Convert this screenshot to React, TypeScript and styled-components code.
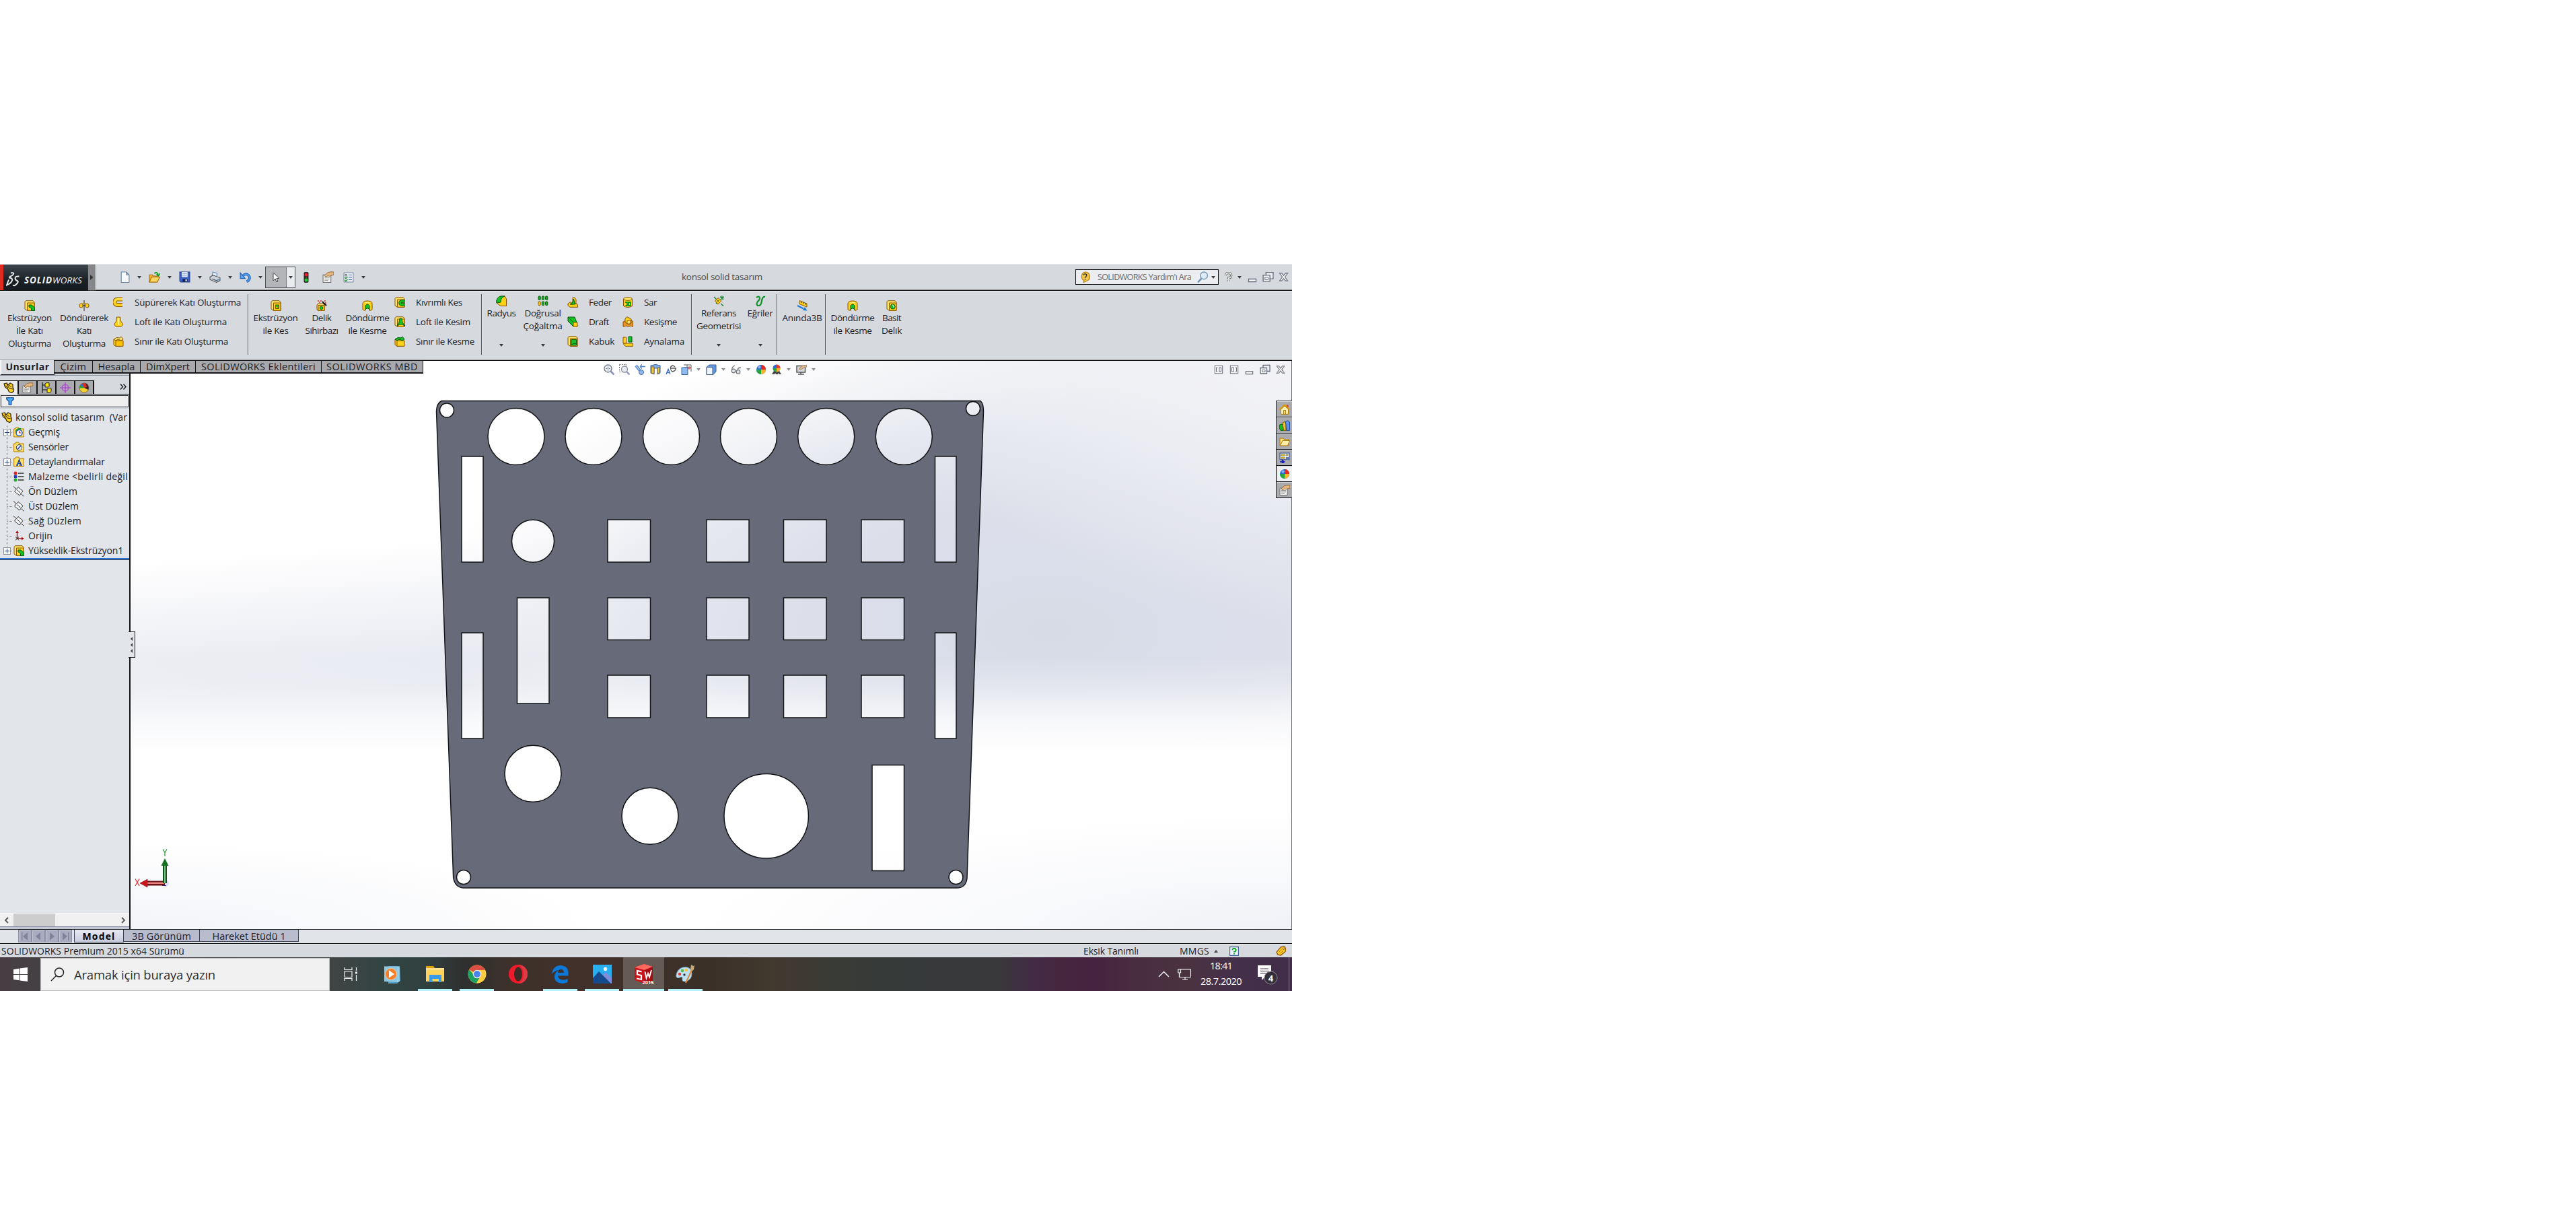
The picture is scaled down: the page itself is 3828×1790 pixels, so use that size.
import React, { useLayoutEffect, useRef, useState } from 'react';
import styled, { createGlobalStyle, css } from 'styled-components';

const Global = createGlobalStyle`
  body { margin: 0; background: #fff; }
  * { box-sizing: border-box; }
  svg { display: block; flex: none; }
`;

/* ---------- text that keeps a fixed run length ---------- */

const Run = styled.span<{ $size: number; $bold?: boolean; $color?: string; $lh?: number }>`
  display: block;
  flex: none;
  white-space: pre;
  font-family: 'Open Sans', 'Noto Sans', sans-serif;
  font-size: ${p => p.$size}px;
  font-weight: ${p => (p.$bold ? 700 : 400)};
  line-height: ${p => p.$lh ?? 19}px;
  color: ${p => p.$color ?? '#1b1b1f'};
`;

type TextProps = { children: string; w: number; size?: number; bold?: boolean; color?: string; lh?: number };

function Text({ children, w, size = 13.5, bold, color, lh }: TextProps) {
  const ref = useRef<HTMLSpanElement>(null);
  const [gap, setGap] = useState(0);
  useLayoutEffect(() => {
    const range = document.createRange();
    range.selectNodeContents(ref.current!);
    setGap((w - range.getBoundingClientRect().width) / children.length);
  }, []);
  return (
    <Run ref={ref} $size={size} $bold={bold} $color={color} $lh={lh} style={{ letterSpacing: gap, width: w }}>
      {children}
    </Run>
  );
}

/* ---------- icons ---------- */

const Icon = ({ s = 16, v = '0 0 16 16', children }: { s?: number; v?: string; children: React.ReactNode }) => (
  <svg width={s} height={s} viewBox={v}>{children}</svg>
);

const GOLD = '#ffd21a';
const EDGE = '#8a5200';
const GREEN = '#12c322';

const Block = () => (
  <>
    <path d="M1 2.5 2.5.7H13L15 3V15.3H4.5L1 13Z" fill="#ffe66a" stroke={EDGE} />
    <path d="M4.5 4H15V15.3H4.5Z" fill={GOLD} stroke={EDGE} />
  </>
);

const icons = {
  boss: <><Block /><path d="M7 7h4l4.5 4v4.5h-5V12L7 10Z" fill={GREEN} stroke="#07570f" /></>,
  revolve: <><path d="M8 0v16M4 8h8" stroke="#222" /><ellipse cx="3.5" cy="8" rx="2.7" ry="3" fill={GOLD} stroke={EDGE} /><ellipse cx="12.5" cy="8" rx="2.7" ry="3" fill={GOLD} stroke={EDGE} /><path d="M3 5.5q5-3 10 0" fill="none" stroke="#c98a00" /></>,
  sweep: <><path d="M14 3.5H6.5a4 4 0 0 0 0 8.5H14" fill="none" stroke={EDGE} strokeWidth="6" /><path d="M14 3.5H6.5a4 4 0 0 0 0 8.5H14" fill="none" stroke={GOLD} strokeWidth="4" /><path d="M14 3H6.5a4 4 0 0 0-3.6 4" fill="none" stroke="#fff3a0" /></>,
  loft: <><path d="M5.5 1h5l1 6 3.5 5-3 3.3H4.5L1.5 12 5 7Z" fill={GOLD} stroke={EDGE} /><path d="M8 2v11" stroke="#fff3a0" strokeWidth="2" /></>,
  boundary: <><path d="M1 5h11v10H3L1 13Z" fill={GOLD} stroke={EDGE} /><path d="M4 7h11v8.3H4Z" fill="#ffc400" stroke={EDGE} /><path d="M1 5q4-4 9-2l2-2 3 4-3 2-2-1Q6 4 4 7Z" fill="#ffe66a" stroke={EDGE} /></>,
  cut: <><Block /><path d="M7.5 7h5v5.500h-5Z" fill={GREEN} stroke="#6b4a00" /><path d="M8 9.5h2.500V12H8Z" fill="#d9b400" /></>,
  wizard: <><path d="M1 7l1.500-2H10l2 2v8.500H3L1 14Z" fill="#ffe66a" stroke={EDGE} /><path d="M3 7.500h9v8H3Z" fill={GOLD} stroke={EDGE} /><circle cx="7.500" cy="11.500" r="2.300" fill={GREEN} stroke="#07570f" /><path d="M9 2l6 6" stroke="#111" strokeWidth="2" /><path d="M2 1h2M6 1h2M12 1h2M4 3h2M13 4h2" stroke="#e02a1a" strokeWidth="1.500" /></>,
  revcut: <><path d="M1 5q0-4 7-4t7 4v9l-3.500 1.500L10 11H6l-1.500 4.500L1 14Z" fill={GOLD} stroke={EDGE} /><path d="M5 14V8q3-4 6 0v6l-2-2H7Z" fill={GREEN} stroke="#07570f" /><path d="M4 4q4-2 8 0" fill="none" stroke="#fff3a0" /></>,
  sweepcut: <><Block /><path d="M15 6.500h-4a2.500 2.500 0 0 0 0 5h4" fill="none" stroke="#07570f" strokeWidth="4.500" /><path d="M15 6.500h-4a2.500 2.500 0 0 0 0 5h4" fill="none" stroke={GREEN} strokeWidth="2.500" /></>,
  loftcut: <><Block /><path d="M8 3h3l1 6 3.500 5-4-2H8l-4 2 3-5Z" fill={GREEN} stroke="#07570f" /></>,
  boundcut: <><path d="M1 5h11v10H3L1 13Z" fill={GOLD} stroke={EDGE} /><path d="M4 7h11v8.300H4Z" fill={GOLD} stroke={EDGE} /><path d="M1 5q4-4 9-2l2-2 3 4-3 2-2-1Q6 4 4 7Z" fill={GREEN} stroke="#07570f" /></>,
  fillet: <><path d="M1 7 7 1h6l2.500 4v10.500H7L1 11Z" fill={GOLD} stroke={EDGE} /><path d="M1 7Q3 1 8 1h5Q7 3 7 10L1 11Z" fill={GREEN} stroke="#07570f" /></>,
  pattern: <>{[0, 1, 2].map(i => [0, 1].map(j => <g key={`${i}${j}`}><rect x={1 + i * 5.300} y={1 + j * 8} width="3.200" height="5.500" rx="1" fill={i === 0 && j ? GOLD : '#1fae2c'} stroke={i === 0 && j ? EDGE : '#07570f'} /></g>))}</>,
  rib: <><path d="M1 10 4 8h2v3l8-1 1.500 2v3.300H4L1 13Z" fill={GOLD} stroke={EDGE} /><path d="M8 1h3l2 3v6H8Z" fill={GOLD} stroke={EDGE} /><path d="M4 11Q9 9 9.500 3l2 8Z" fill={GREEN} stroke="#07570f" /></>,
  draft: <><path d="M1 1h10l3 8v6L8 14 1 7Z" fill={GREEN} stroke="#07570f" /><path d="M1 1 9 9" stroke="#07570f" /><path d="M9 9h6v6.300H9Z" fill={GOLD} stroke={EDGE} /></>,
  shell: <><Block /><path d="M6 5.500h7.500v8.500H6Z" fill={GREEN} stroke="#07570f" /><path d="M6 14l2.500-2.500h5" stroke="#07570f" fill="none" /></>,
  wrap: <><path d="M1.500 3v10.500q6.500 4 13 0V3" fill={GOLD} stroke={EDGE} /><ellipse cx="8" cy="3" rx="6.500" ry="2.300" fill="#ffe66a" stroke={EDGE} /><path d="M4 8h3v5H4.500M9 8h3v5H9Z" fill="none" stroke="#0b9a1a" strokeWidth="1.800" /></>,
  intersect: <><path d="M1 8l4-2h9l1.500 2v7.300l-3-1.300-4 1.300-3-1.300-4.500 1.300Z" fill="#e8952a" stroke={EDGE} /><path d="M4 3l3-2.300L13 4v6l-3 2-6-3Z" fill={GOLD} stroke={EDGE} /><path d="M7 6h5v5H7Z" fill="#ffe66a" stroke={EDGE} /></>,
  mirror: <><path d="M1 2h4.500v9H1Z" fill={GOLD} stroke={EDGE} /><path d="M9 1h5v8H9Z" fill={GREEN} stroke="#07570f" /><path d="M4 11h11.500v4.300H4L1.500 12Z" fill={GOLD} stroke={EDGE} /></>,
  refgeo: <><path d="M1 2l4 4M11 12l4 3.500M4 12l2-2" stroke="#0d7d22" strokeWidth="1.300" /><path d="M7 3.500 12 8l-5 5-4.500-5Z" fill={GOLD} stroke={EDGE} /><path d="M7 7v2" stroke="#333" strokeWidth="1.500" /><path d="M13 0v7M9.500 3.500h6.500M10.500 1l5 5M15.500 1l-5 5" stroke="#0d7d22" /></>,
  curves: <path d="M2 3q5-3 5 1 0 2-3 5-3 4 0 6 5 1 6-7 1-7 5-6" fill="none" stroke="#17902e" strokeWidth="2.200" />,
  instant: <><path d="M4 .5 15 5v5L4 5.500Z" fill={GOLD} stroke={EDGE} /><path d="M7 2v2M10 3v2.500M13 4v2.500" stroke="#333" /><path d="M1 8l9 4.500" stroke="#1b77d8" strokeWidth="2" /><path d="M15.500 15.500 9 15l3-5Z" fill="#1b77d8" /></>,
  hole: <><Block /><circle cx="9.700" cy="9.500" r="3.500" fill={GREEN} stroke="#07570f" /><path d="M9 7q3 1 2 4" stroke="#bff5c0" fill="none" strokeWidth="1.500" /></>,
  doc: <path d="M3 1h7l4 4v10.500H3ZM10 1v4h4" fill="#f6faff" stroke="#5e7f9f" />,
  open: <><path d="M1 5h4l1 1.500h6v8.500H1Z" fill="#f7b52b" stroke="#a86a00" /><path d="M1 15l3-7h11.500L12 15Z" fill="#ffd766" stroke="#a86a00" /><path d="M8 3q4-3 5 2M11 4l2.500 2.500L15.500 3" stroke="#1f9c2d" fill="none" strokeWidth="1.700" /></>,
  save: <><path d="M1 1h14v14H2.500L1 13.500Z" fill="#3d63c8" stroke="#1d3a88" /><path d="M4 1h8v7H4Z" fill="#e8eefa" /><path d="M5 3h6M5 5.500h6" stroke="#8fa4cf" /><path d="M5 10.500h7V15H5Z" fill="#16285f" /><path d="M9 11.500h2V14H9Z" fill="#fff" /></>,
  print: <><path d="M5 1l6 2-1 5-6-2Z" fill="#eaf1fb" stroke="#5d7fae" /><path d="M1 8l4-2.500L15 9v4l-5 2.500-9-4Z" fill="#cfd3da" stroke="#4c5158" /><path d="M4 10.500l6 2.500 4-2" stroke="#4c5158" fill="none" /><path d="M11 12l3-1.500V12l-3 1.700Z" fill="#4aa0e8" /></>,
  undo: <><path d="M5 6q4-4 8 0 3 5-3 8.500" fill="none" stroke="#1f5fc0" strokeWidth="3.600" /><path d="M5 6q4-4 8 0 3 5-3 8.500" fill="none" stroke="#58a2f0" strokeWidth="1.600" /><path d="M1 2v8h7Z" fill="#58a2f0" stroke="#1f5fc0" /></>,
  cursor: <path d="M4 1v12l3-3 2 5 2-1-2-4.500h4Z" fill="#fff" stroke="#444" />,
  traffic: <><rect x="4.500" y="0" width="7" height="16" rx="2" fill="#2a2a2a" /><circle cx="8" cy="4" r="2.500" fill="#e81c2a" /><circle cx="8" cy="8" r="1.300" fill="#5a4a10" /><circle cx="8" cy="12" r="2.500" fill="#22c436" /></>,
  props: <><path d="M1 5h11v10.500H1Z" fill="#f4f4f2" stroke="#6d6d6d" /><path d="M3 8.500h7M3 10.800h7M3 13h5" stroke="#8b8b8b" /><path d="M3 6l4-4q4-2 9-1v4l-4 1-2 1-2-1-3 2Z" fill="#e6b680" stroke="#8a5a2a" strokeWidth=".8" /></>,
  list: <><path d="M1 1h14v14H1Z" fill="#e9eef6" stroke="#7688a5" /><path d="M3 3.500h2.500V6H3Z" fill="#fff" stroke="#456" strokeWidth=".8" /><path d="M8 4.500h5M8 8h5M8 11.500h5" stroke="#4b6aa0" /><path d="M2.500 8l1.500 2 2.500-3M2.500 12l1.500 2 2.500-3" stroke="#1d9c2a" fill="none" strokeWidth="1.300" /></>,
  part: <><path d="M1 2l4-1 2 3 3-3 4 2v4l1.500 3v3l-3 2.500-4-1.500-2-4-4-3Z" fill={GOLD} stroke="#2c1f00" strokeWidth="1.200" /><path d="M5 3l4 6 5 1M8 4l4 3M3 5l4 3" stroke="#2c1f00" fill="none" /></>,
  config: <><path d="M2 0v16M2 4h5M2 11h7" stroke="#111" strokeWidth="1.200" /><path d="M6 2l2-1.300h4v5L10.500 7H6Z" fill="#ffe600" stroke="#222" /><path d="M9 10l2-1.300h4v5L13.500 15H9Z" fill="#ffe600" stroke="#222" /></>,
  target: <><circle cx="8" cy="8" r="4.700" fill="none" stroke="#b24bd8" strokeWidth="1.500" /><path d="M8 0v16M0 8h16" stroke="#b24bd8" strokeWidth="1.500" /></>,
  ball: <><circle cx="8" cy="8" r="7" fill="#2c6fd8" /><path d="M8 8V1a7 7 0 0 1 7 7Z" fill="#e02a22" /><path d="M8 8h7a7 7 0 0 1-7 7Z" fill="#f7b52b" /><path d="M8 8v7a7 7 0 0 1-7-7Z" fill="#24a63a" /><circle cx="5.500" cy="4.500" r="2" fill="#fff" opacity=".5" /></>,
  beach: <><circle cx="8" cy="8" r="7" fill="#f7d02b" stroke="#7a4a10" strokeWidth=".7" /><path d="M8 8L2 4.500A7 7 0 0 1 9 1Z" fill="#2c6fd8" /><path d="M8 8L9 1a7 7 0 0 1 5 10Z" fill="#3a2030" /><path d="M8 8 5 2q6-3 7 5Z" fill="#e02a22" /><path d="M8 8L1 9Q1 6 2.500 4Z" fill="#24a63a" /></>,
  funnel: <path d="M1 1h14v3l-4.500 4.500V15h-5V8.500L1 4Z" fill="#48a8f0" stroke="#0f3f9c" strokeWidth="1.500" />,
  history: <><path d="M.7 3h2l1-2h4l1 2h6.600v12H.7Z" fill="#ffe166" stroke="#b07800" /><circle cx="8.500" cy="9" r="4.500" fill="#fff" stroke="#2a55b8" strokeWidth="1.500" /><path d="M8.500 6v3h2.500" stroke="#c02020" fill="none" /><path d="M3 7q2-5 8-4" stroke="#1a9a2a" fill="none" strokeWidth="1.800" /></>,
  sensor: <><path d="M.7 3h2l1-2h4l1 2h6.600v12H.7Z" fill="#ffe166" stroke="#b07800" /><circle cx="8.500" cy="8.800" r="4.200" fill="#e8eefc" stroke="#333" /><path d="M6 11.500 11 6" stroke="#2a3fc8" strokeWidth="1.500" /></>,
  annot: <><path d="M.7 3h2l1-2h4l1 2h6.600v12H.7Z" fill="#ffe166" stroke="#b07800" /><path d="M4 13h3M9 13h4M5.500 13 8.500 5l3 8M6.500 10.500h4" fill="none" stroke="#1b3fa8" strokeWidth="1.500" /></>,
  material: <><circle cx="3" cy="3" r="2.500" fill="#e02222" /><circle cx="3" cy="8" r="2.500" fill="#2038c8" /><circle cx="3" cy="13" r="2.500" fill="#1fae2c" /><path d="M7 3h8.500M7 8h8.500M7 13h8.500" stroke="#333" strokeWidth="1.500" /></>,
  plane: <><path d="M7 1.500 14 7.500 9 14 1.500 8Z" fill="#f4f5f8" stroke="#333" /><path d="M0 .5 4 4M5.500 5.500l5 5M12 12l3.500 3.500" stroke="#222" /></>,
  origin: <><path d="M5.500 12V2M5.500 12H13" stroke="#a51515" strokeWidth="1.400" /><path d="M5.500 0 8 4H3ZM16 12l-4-2.500v5Z" fill="#a51515" /><path d="M3 9.500l5 5M8 9.500l-5 5" stroke="#222" /></>,
  zoomfit: <><circle cx="6.500" cy="6.500" r="5.500" fill="#e9edf4" stroke="#6f7680" strokeWidth="1.300" /><path d="M6.500 3.500v6M3.500 6.500h6" stroke="#6f7680" strokeDasharray="2 2" /><path d="M10.500 10.500l5 5" stroke="#8a93c0" strokeWidth="2.500" /></>,
  zoomarea: <><path d="M.5.500h11v11H.5Z" fill="none" stroke="#777" strokeDasharray="2 1.500" /><circle cx="8" cy="7.500" r="4.500" fill="#e9edf4" stroke="#8a9098" strokeWidth="1.300" /><path d="M11 11l4.500 4.500" stroke="#8a93c0" strokeWidth="2.300" /></>,
  prev: <><path d="M2 2 9 11" stroke="#4c7fc4" strokeWidth="4" /><path d="M2 2 9 11" stroke="#a8cbf0" strokeWidth="1.800" /><circle cx="10" cy="12" r="3.500" fill="#8fb8e8" stroke="#4c6fa8" /><path d="M8 3.500h8M8 3.500l3-3M8 3.500l3 3" stroke="#4c7fc4" fill="none" strokeWidth="1.300" /></>,
  section: <><path d="M1 2q7-3 14 0v11l-4 2V6H6v9l-5-2Z" fill="#7fb0ea" stroke="#3a64a0" /><path d="M2 4h4v10.500L2 13ZM11 5h3v8l-3 1.500Z" fill="#f2c53a" stroke="#7a5a10" strokeWidth=".8" /></>,
  annview: <><path d="M1 15 4 7.500 7 15M2 12.500h4" fill="none" stroke="#3a6cc0" strokeWidth="1.400" /><path d="M8 8q-2-5 3-6l3 2M15 5q1 5-5 6l-2-2M8 6h7" fill="none" stroke="#555" strokeWidth="1.300" /></>,
  orient: <><path d="M4 1h11v10M9 1v10M4 5h11" fill="none" stroke="#555" /><path d="M1 5h9v10.500H1Z" fill="#8fbcf0" stroke="#3a64a0" /><path d="M12 3v5M9.500 6h5" stroke="#d84040" /></>,
  cube: <><path d="M1 4.500 5 1h10v10l-4 4.500H1Z" fill="#5e98e0" stroke="#44608c" /><path d="M1 4.500h9v11H1Z" fill="#eef4fc" stroke="#44608c" /></>,
  glasses: <><path d="M2 9Q1 4 6 2M10 8q1-3 5-3" stroke="#777" fill="none" strokeWidth="1.300" /><circle cx="4" cy="10" r="2.800" fill="#dfe6ee" stroke="#777" strokeWidth="1.300" /><circle cx="11" cy="11.500" r="2.800" fill="#dfe6ee" stroke="#777" strokeWidth="1.300" /></>,
  scene: <><path d="M1 15l3-5h8l3 5h-3l-1-2-1 2H7l-1-2-1 2Z" fill="#444" /><circle cx="8" cy="6" r="5.500" fill="#2c6fd8" /><path d="M8 6V.5A5.500 5.500 0 0 1 13.500 6Z" fill="#e04038" /><path d="M8 6h5.500A5.500 5.500 0 0 1 8 11.500Z" fill="#f7b52b" /><path d="M8 6v5.500A5.500 5.500 0 0 1 2.500 6Z" fill="#24a63a" /></>,
  monitor: <><path d="M1 2.500h12.500v9.500H1Z" fill="#d8dade" stroke="#555" strokeWidth="1.500" /><path d="M7 12v2.500M3 15h9" stroke="#555" strokeWidth="1.500" /><path d="M4 7l4-4q3-2 7.500-1.500v2.500l-5 2-3.500 2Z" fill="#dcb78c" stroke="#8a6a4a" strokeWidth=".7" /></>,
  helpball: <><path d="M8 1a6.500 6.500 0 0 1 3 12.300L6 15.500 6.500 13A6.500 6.500 0 0 1 8 1Z" fill="#f5c640" stroke="#a87810" /><path d="M5.700 5.500q.5-1.800 2.300-1.800 2.300.2 2.300 1.800T8 8.500v1M8 10.700v1.300" fill="none" stroke="#333" strokeWidth="1.300" /></>,
  lens: <><circle cx="9.500" cy="6" r="5" fill="#dcebfa" stroke="#7090b0" strokeWidth="1.300" /><path d="M6 10 1 15.500" stroke="#6f8fb4" strokeWidth="2.200" /></>,
  quest: <><path d="M3.500 5.500q.5-4 4.500-4 4.500.2 4.500 4T8 9.500v2M8 13v2" fill="none" stroke="#555" strokeWidth="3.400" /><path d="M3.500 5.500q.5-4 4.500-4 4.500.2 4.500 4T8 9.500v2M8 13v2" fill="none" stroke="#f2f2f2" strokeWidth="1.700" /></>,
  min: <path d="M2.500 10.500h11v4h-11Z" fill="#fff" stroke="#66697a" strokeWidth="1.300" />,
  restore: <><path d="M5 1.500h10v9H5Z" fill="#f0f1f4" stroke="#66697a" strokeWidth="1.300" /><path d="M1 5.500h9.500V14H1Z" fill="#fff" stroke="#66697a" strokeWidth="1.300" /><path d="M3.500 8.500h4.500v3H3.500Z" fill="none" stroke="#66697a" /></>,
  close: <path d="M1.500 2h3.500L8 5.800 11 2h3.500L10 8l4.500 6H11L8 10.200 5 14H1.500L6 8Z" fill="#fff" stroke="#66697a" strokeWidth="1.200" />,
  paneL: <><path d="M1.500 1.500h13v13h-13Z" fill="#f6f7f9" stroke="#70737f" strokeWidth="1.200" /><path d="M4 4.500v7M4 4.500h2M4 11.500h2M9 4.500h3v7H9Z" fill="none" stroke="#70737f" strokeWidth="1.200" /></>,
  paneR: <><path d="M1.500 1.500h13v13h-13Z" fill="#f6f7f9" stroke="#70737f" strokeWidth="1.200" /><path d="M12 4.500v7M12 4.500h-2M12 11.500h-2M4 4.500h3v7H4Z" fill="none" stroke="#70737f" strokeWidth="1.200" /></>,
  home: <><path d="M11 1.500h2.500V6H11Z" fill="#d83a2a" /><path d="M2.500 8v7.300h11V8L8 3Z" fill="#fff3b8" stroke="#a87810" /><path d="M.7 8.500 8 1.500l7.300 7" fill="none" stroke="#d99a10" strokeWidth="2" /><path d="M6.500 9.500h3v5.800h-3Z" fill="#ffe066" stroke="#a87810" /></>,
  books: <><path d="M.7 7 4 6l2 2v7.300H2L.7 13Z" fill={GREEN} stroke="#07570f" /><path d="M5 4l3-1.500L10 5v10.300H6.500Z" fill="#f7c62b" stroke="#7a5200" /><path d="M9.500 2 13 .8 15.500 3v12.300h-5Z" fill="#5f92e8" stroke="#23478f" /></>,
  folder: <><path d="M1 3h5l1 1.500h6.500v9.500H1Z" fill="#ffdf7a" stroke="#b07a10" /><path d="M1.500 14 5 6.500h10.500L12.500 14Z" fill="#fff0a8" stroke="#b07a10" /></>,
  views: <><path d="M1 1h14v9.500H1Z" fill="#eef3fb" stroke="#5b6f98" strokeWidth="1.500" /><path d="M3 3h5v2H3ZM10 3h3v2h-3ZM3 7h5v2H3Z" fill="#f0d000" stroke="#555" strokeWidth=".5" /><path d="M10 7h4v3h-4Z" fill="#5b77b8" /><path d="M1 14h4M4.500 11.500 7.500 14l-3 2.500Z" stroke="#1018c0" strokeWidth="1.500" fill="#1018c0" /></>,
  tag: <><path d="M1 10 8 2l5-1 2.500 3-.5 5-7 6-5-1Z" fill="#ffca20" stroke="#8a5200" strokeWidth="1.300" /><circle cx="12" cy="4.500" r="1.300" fill="#fff" stroke="#8a5200" /><path d="M5 10l4-4M7 12l4-4" stroke="#8a5200" strokeWidth=".8" /></>,
  qbox: <><path d="M.7.700h14.600v14.600H.7Z" fill="#eef2fa" stroke="#3b5f94" strokeWidth="1.300" /><path d="M5 6q0-2.500 3-2.500T11 6 8 9v1M8 11.500v2" fill="none" stroke="#12a322" strokeWidth="2.200" /></>,
};
type IconName = keyof typeof icons;
const I = ({ n, s = 16 }: { n: IconName; s?: number }) => <Icon s={s}>{icons[n]}</Icon>;

const Caret = styled.i<{ $c?: string; $up?: boolean }>`
  flex: none;
  width: 0;
  height: 0;
  border-left: 3.5px solid transparent;
  border-right: 3.5px solid transparent;
  ${p => (p.$up ? 'border-bottom' : 'border-top')}: 4px solid ${p => p.$c ?? '#3c3d42'};
`;

/* ---------- frame ---------- */

const Screen = styled.main`
  width: 1920px;
  height: 1080px;
  margin-top: 392px;
  display: flex;
  flex-direction: column;
  overflow: hidden;
  background: #d6dade;
`;

const TitleBar = styled.header`
  height: 40px;
  flex: none;
  display: flex;
  align-items: center;
  background: #d6dadf;
  border-top: 1px solid #e6e7e9;
  border-bottom: 1px solid #101010;
  box-shadow: inset 0 -2px #a9abad;
  padding-bottom: 1px;
`;

const Brand = styled.div`
  width: 131px;
  height: 38px;
  border-left: 5px solid #df2b20;
  background: linear-gradient(#3c454b, #1b2127 60%, #161b20);
  display: flex;
  align-items: center;
  padding: 5px 0 0 4px;
  gap: 6px;
`;

const BrandName = styled.div`
  display: flex;
  font-style: italic;
  padding-top: 4px;
`;

const BrandArrow = styled.div`
  width: 10px;
  height: 38px;
  background: #85878a;
  display: flex;
  align-items: center;
  justify-content: center;
  box-shadow: 1px 0 2px #9c9ea0;
`;

const Slot = styled.div<{ $w: number; $ml?: number }>`
  flex: none;
  width: ${p => p.$w}px;
  margin-left: ${p => p.$ml ?? 0}px;
  display: flex;
  align-items: center;
  justify-content: center;
`;

const SelectBox = styled.div`
  width: 45px;
  height: 32px;
  margin: 0 4px 0 -4px;
  display: flex;
  border: 1px solid #4a4b4d;
`;
const SelectMain = styled.div`
  width: 31px;
  background: #b3b5b8;
  border-right: 1px solid #77797c;
  display: flex;
  align-items: center;
  justify-content: center;
`;
const SelectDrop = styled.div`
  flex: 1;
  background: #e9ebee;
  display: flex;
  align-items: center;
  justify-content: center;
`;

const SearchBox = styled.div`
  width: 213px;
  height: 23px;
  margin-left: 465px;
  border: 1px solid #111;
  background: #ebedf0;
  display: flex;
  align-items: center;
  padding-left: 5px;
`;

const Ribbon = styled.section`
  height: 104px;
  flex: none;
  display: flex;
  align-items: flex-start;
  background: #d6dadf;
  border-top: 1px solid #f1f2f3;
  border-bottom: 1px solid #101010;
  box-shadow: inset 0 -1px #9fa1a3;
`;

const Big = styled.div<{ $w: number; $ml?: number; $high?: boolean }>`
  flex: none;
  width: ${p => p.$w}px;
  height: 82px;
  margin-left: ${p => p.$ml ?? 0}px;
  padding-top: ${p => (p.$high ? 6 : 13)}px;
  display: flex;
  flex-direction: column;
  align-items: center;
  ${p => p.$high && css`& > i { margin-top: auto; }`}
`;
const Lines = styled.div`
  padding-top: 1px;
  display: flex;
  flex-direction: column;
  align-items: center;
`;
const Stack = styled.div<{ $w: number; $ml?: number }>`
  flex: none;
  width: ${p => p.$w}px;
  margin-left: ${p => p.$ml ?? 0}px;
  padding-top: 2px;
`;
const StackRow = styled.div`
  height: 29px;
  display: flex;
  align-items: center;
  gap: 16px;
  & > svg { margin-bottom: 2px; }
`;
const Sep = styled.div<{ $ml?: number }>`
  width: 2px;
  height: 90px;
  margin: 4px 0 0 ${p => p.$ml ?? 0}px;
  border-left: 1px solid #55575a;
  background: #e6e8ea;
`;

type BigProps = { icon: IconName; w: number; ml?: number; lines: [string, number][]; menu?: boolean };
const BigButton = ({ icon, w, ml, lines, menu }: BigProps) => (
  <Big $w={w} $ml={ml} $high={menu}>
    <I n={icon} />
    <Lines>{lines.map(([t, tw]) => <Text key={t} w={tw}>{t}</Text>)}</Lines>
    {menu && <Caret />}
  </Big>
);
const SmallButtons = ({ w, ml, rows }: { w: number; ml?: number; rows: [IconName, string, number][] }) => (
  <Stack $w={w} $ml={ml}>
    {rows.map(([ic, t, tw]) => <StackRow key={t}><I n={ic} /><Text w={tw}>{t}</Text></StackRow>)}
  </Stack>
);

/* ---------- work area ---------- */

const Work = styled.div`
  height: 844px;
  flex: none;
  display: grid;
  grid-template-columns: 194px 1fr;
  position: relative;
`;

const CommandTabs = styled.nav`
  position: absolute;
  left: 0;
  top: -1px;
  display: flex;
  z-index: 2;
`;
const CommandTab = styled.div<{ $w: number; $on?: boolean }>`
  width: ${p => p.$w}px;
  height: ${p => (p.$on ? 22 : 20)}px;
  display: flex;
  justify-content: center;
  background: ${p => (p.$on ? '#d9dce1' : '#a7a9ad')};
  border: solid #17171a;
  border-width: ${p => (p.$on ? '0 1px 1px 0' : '1px 1px 2px 0')};
  ${p => p.$on && css`border-left: 2px solid #f4f5f6;`}
`;

const Side = styled.aside`
  width: 194px;
  padding-top: 21px;
  display: flex;
  flex-direction: column;
  background: #d6dadf;
  border-right: 2px solid #141414;
  overflow: hidden;
`;
const SideTabs = styled.div`
  height: 29px;
  flex: none;
  padding-top: 7px;
  border-top: 1px solid #7d8796;
  display: flex;
  align-items: flex-end;
  border-bottom: 1px solid #141414;
`;
const SideTab = styled.div<{ $on?: boolean }>`
  width: 28px;
  height: ${p => (p.$on ? 21 : 20)}px;
  margin-bottom: ${p => (p.$on ? -1 : 0)}px;
  display: flex;
  align-items: center;
  justify-content: center;
  background: ${p => (p.$on ? '#e9ebee' : '#a9abae')};
  border: solid #141414;
  border-width: 1px 2px 0 0;
`;
const Chevron = styled.div`
  margin-left: auto;
  padding: 0 4px 6px 0;
`;
const Filter = styled.div`
  height: 18px;
  flex: none;
  margin: 1px 1px 1px 1px;
  padding-left: 7px;
  display: flex;
  align-items: center;
  background: #efeff0;
  border: 1px solid #3b3d42;
`;
const Tree = styled.div`
  flex: 1;
  background: #e2e5ea;
  border-top: 1px solid #c9ccd2;
  overflow: hidden;
  padding-top: 2px;
`;
const TreeRow = styled.div<{ $root?: boolean }>`
  height: 22px;
  display: flex;
  align-items: center;
  gap: ${p => (p.$root ? 5 : 6)}px;
  padding-left: 2px;
  & > span { padding-bottom: 1px; }
`;
const Branch = styled.div<{ $last?: boolean }>`
  flex: none;
  width: 13px;
  height: 22px;
  margin-left: 3px;
  margin-right: -4px;
  display: flex;
  align-items: center;
  background:
    repeating-linear-gradient(90deg, #777 0 1px, transparent 1px 2px) 6px 11px / 12px 1px no-repeat,
    repeating-linear-gradient(180deg, #777 0 1px, transparent 1px 2px) 5px 0 / 1px ${p => (p.$last ? 11 : 22)}px no-repeat;
`;
const Expander = styled.div`
  width: 11px;
  height: 11px;
  border: 1px solid #8d9097;
  background:
    linear-gradient(#2b4a9c, #2b4a9c) center / 7px 1px no-repeat,
    linear-gradient(#2b4a9c, #2b4a9c) center / 1px 7px no-repeat,
    #fff;
`;
const Rollback = styled.div`
  height: 3px;
  background: #2a73d8;
  border-bottom: 1px solid #444;
`;
const Scroll = styled.div`
  height: 20px;
  flex: none;
  display: flex;
  align-items: center;
  background: #f0f0f0;
  border-top: 1px solid #fff;
`;
const Thumb = styled.div`
  width: 62px;
  height: 19px;
  margin-right: auto;
  background: #cdcdcd;
`;
const SideFoot = styled.div`
  height: 4px;
  flex: none;
  background: #c3c6d4;
  border-top: 1px solid #8c8fa8;
`;

const Viewport = styled.div`
  position: relative;
  border-right: 1px solid #62656f;
  display: flex;
  justify-content: flex-end;
  background:
    radial-gradient(ellipse 900px 170px at 100% 100%, rgba(238, 240, 246, .9), rgba(245, 246, 250, .6) 50%, rgba(255, 255, 255, 0) 100%),
    radial-gradient(ellipse 700px 130px at 0% 100%, rgba(240, 242, 247, .8), rgba(255, 255, 255, 0) 100%),
    linear-gradient(180deg, rgba(255, 255, 255, 0) 52%, rgba(255, 255, 255, .25) 57%, rgba(255, 255, 255, .75) 63%, #fff 69%),
    radial-gradient(ellipse 620px 420px at 1760px -20px, rgba(243, 243, 246, .95), rgba(240, 241, 245, .6) 50%, rgba(240, 241, 245, 0) 100%),
    radial-gradient(ellipse 920px 470px at 1366px 400px, #d6dbe6 0, #dadeea 24%, #dddfea 42%, rgba(226, 229, 239, .9) 62%, rgba(235, 236, 241, .55) 78%, rgba(255, 255, 255, 0) 100%),
    radial-gradient(ellipse 800px 700px at 1700px 300px, rgba(226, 230, 239, .9), rgba(235, 237, 242, .75) 50%, rgba(255, 255, 255, 0) 100%),
    linear-gradient(176deg, rgba(255, 255, 255, 0) 31%, #f0f1f6 43%, #e2e5ee 54%, #e2e5ee 100%),
    #fff;
`;
const Model = styled.svg`
  position: absolute;
  left: 0;
  top: 0;
`;
const HeadsUp = styled.div`
  position: absolute;
  left: 699px;
  top: 2px;
  height: 22px;
  display: flex;
  align-items: center;
`;
const DocButtons = styled.div`
  position: absolute;
  right: 5px;
  top: 2px;
  height: 22px;
  display: flex;
  align-items: center;
`;
const TaskPane = styled.div`
  width: 24px;
  height: 145px;
  margin: 59px -1px 0 0;
  border-top: 1px solid #333;
  z-index: 1;
`;
const PaneTab = styled.div<{ $on?: boolean }>`
  height: 24px;
  display: flex;
  align-items: center;
  justify-content: center;
  background: ${p => (p.$on ? '#eef0f4' : '#a9abae')};
  border-left: 1px solid #141414;
  border-bottom: 1px solid #141414;
  box-shadow: inset 1px 1px #d5d6d8;
`;
const Handle = styled.div`
  position: absolute;
  left: 191px;
  top: 402px;
  width: 10px;
  height: 39px;
  display: flex;
  flex-direction: column;
  align-items: center;
  justify-content: center;
  gap: 3px;
  background: #e2e5ea;
  border: 1px solid #141414;
  border-left: 0;
`;
const HandleArrow = styled.i`
  border: solid transparent;
  border-width: 3px 3px 3px 0;
  border-right-color: #3a3b40;
`;

/* ---------- bottom ---------- */

const ModelTabs = styled.div`
  height: 22px;
  flex: none;
  display: flex;
  background: #e1e4e9;
  border-top: 1px solid #0b0b0b;
  border-bottom: 1px solid #0b0b0b;
  padding-left: 27px;
`;
const Nav = styled.div`
  width: 20px;
  height: 19px;
  display: flex;
  align-items: center;
  justify-content: center;
  background: #a9acc0;
  border: 1px solid #8d90a4;
  box-shadow: inset 1px 1px #c3c5d3;
`;
const ModelTab = styled.div<{ $w: number; $on?: boolean }>`
  width: ${p => p.$w}px;
  height: ${p => (p.$on ? 19 : 18)}px;
  display: flex;
  justify-content: center;
  background: ${p => (p.$on ? 'linear-gradient(#e6e8f2, #c9cddd)' : '#b9bccd')};
  border: solid #3c3e55;
  border-width: 0 1px 1px ${p => (p.$on ? 1 : 0)}px;
`;
const Status = styled.div`
  height: 20px;
  flex: none;
  display: flex;
  align-items: center;
  background: #d6dadf;
  border-top: 1px solid #f0f1f2;
  padding: 0 10px 0 2px;
`;

const TaskBar = styled.footer`
  height: 50px;
  flex: none;
  display: flex;
  align-items: center;
  background: linear-gradient(90deg, #463e43 0, #454044 60px, #414444 490px, #324543 570px, #30403f 630px, #2e302f 690px,
    #3d312a 760px, #43302a 880px, #3f3028 950px, #3a3028 1060px, #42392f 1150px, #393b36 1240px, #363a39 1320px, #39393c 1480px,
    #432a45 1540px, #45263f 1570px, #462340 1630px, #482d40 1690px, #4a323f 1760px, #45304a 1830px, #412d49 1920px);
`;
const StartButton = styled.div`
  width: 60px;
  display: flex;
  justify-content: center;
`;
const TaskSearch = styled.div`
  width: 430px;
  height: 49px;
  margin-top: 1px;
  padding-left: 14px;
  display: flex;
  align-items: center;
  gap: 14px;
  background: #f1f1f1;
  border: 1px solid #bfbfbf;
`;
const TaskApp = styled.div<{ $run?: boolean; $on?: boolean; $ml?: number; $w?: number }>`
  width: ${p => p.$w ?? 51}px;
  height: 50px;
  margin-left: ${p => p.$ml ?? 11}px;
  display: flex;
  align-items: center;
  justify-content: center;
  background: ${p => (p.$on ? '#665a55' : 'transparent')};
  ${p => p.$run && css`box-shadow: inset 0 -3px #b3f2f9;`}
`;
const Tray = styled.div`
  flex: 1;
  height: 50px;
  display: flex;
  align-items: center;
  justify-content: flex-end;
`;
const Clock = styled.div`
  margin: 0 24px 2px 14px;
  display: flex;
  flex-direction: column;
  align-items: center;
`;
const ShowDesktop = styled.div`
  width: 5px;
  height: 50px;
  margin-left: 16px;
  border-left: 1px solid #8b7f8d;
`;

/* ---------- drawing of the console plate ---------- */

const squares = [[903, 63.500], [1050, 63], [1164.500, 63.500], [1280, 63.500]].flatMap(([x, w]) =>
  [[772, 63], [888, 62.500], [1003, 63]].map(([y, h]) => [x, y, w, h]));
const rects = [
  ...squares,
  [686, 678, 32, 157], [1389.500, 678, 31.500, 157],
  [686, 940, 32, 157], [1389.500, 940, 31.500, 157],
  [768.500, 888, 47.500, 157], [1296, 1136.500, 47.500, 157],
];
const circles = [
  [664, 609.500, 10.500], [1446, 607, 10.500], [689, 1303, 10.500], [1420.500, 1303, 10.500],
  [767, 648.500, 42], [882, 648.500, 42], [997.500, 648.500, 42], [1112.500, 648.500, 42], [1227.700, 648.500, 42], [1343.300, 648.500, 42],
  [792, 803.700, 31.500], [792, 1149.300, 42], [966, 1212.300, 42], [1138.700, 1212.300, 62.700],
];
const platePath =
  'M656 595.500H1457Q1461.500 599 1461.500 611L1437 1305Q1435 1319 1422 1319H688.500Q676 1318 673.700 1304L648.500 611Q649 599 656 595.500Z' +
  rects.map(([x, y, w, h]) => `M${x} ${y}h${w}v${h}h${-w}Z`).join('') +
  circles.map(([x, y, r]) => `M${x - r} ${y}a${r} ${r} 0 1 0 ${2 * r} 0a${r} ${r} 0 1 0 ${-2 * r} 0Z`).join('');

const Plate = () => (
  <Model width="1724" height="844" viewBox="194 536 1724 844">
    <path d={platePath} fill="#676a79" fillRule="evenodd" stroke="#131416" strokeWidth="1.500" />
    <circle cx="246" cy="1312" r="5" fill="#dcdcfb" />
    <path d="M241 1315.500h6" stroke="#1a1ac0" />
    <path d="M218 1308.500h27v7h-27Z" fill="#6e1418" />
    <path d="M218 1310.500h26v2.500h-26Z" fill="#e88080" />
    <path d="M208 1312l11-6v12Z" fill="#c8181c" stroke="#7a1014" strokeWidth=".6" />
    <path d="M242 1285h6v27h-6Z" fill="#14501c" />
    <path d="M244 1286h2v26h-2Z" fill="#7cc486" />
    <path d="M245 1275l5.500 11h-11Z" fill="#157020" />
    <path d="M201 1305.500l6 10.500M207 1305.500l-6 10.500" stroke="#f02020" strokeWidth="1.100" />
    <path d="M242 1261.500l3 5 3-5M245 1266v6" stroke="#108a18" strokeWidth="1.100" fill="none" />
  </Model>
);

const NavGlyph = ({ d }: { d: string }) => <svg width="12" height="12" viewBox="0 0 12 12"><path d={d} fill="#80839a" /></svg>;

const treeItems: [IconName, string, number, boolean][] = [
  ['history', 'Geçmiş', 47, true],
  ['sensor', 'Sensörler', 60, false],
  ['annot', 'Detaylandırmalar', 114, true],
  ['material', 'Malzeme <belirli değil', 148, false],
  ['plane', 'Ön Düzlem', 73, false],
  ['plane', 'Üst Düzlem', 75, false],
  ['plane', 'Sağ Düzlem', 79, false],
  ['origin', 'Orijin', 36, false],
  ['boss', 'Yükseklik-Ekstrüzyon1', 141, true],
];

const headsUp: (IconName | 'v')[] = ['zoomfit', 'zoomarea', 'prev', 'section', 'annview', 'orient', 'v', 'cube', 'v', 'glasses', 'v', 'ball', 'scene', 'v', 'monitor', 'v'];

export default function App() {
  return (
    <>
      <Global />
      <Screen>
        <TitleBar>
          <Brand>
            <svg width="21" height="23" viewBox="0 0 21 21" fill="none" stroke="#eef0f2" strokeWidth="1.900">
              <path d="M7 1.500q5-1 4 1.500t-6 4M4 8.500q6 0 5 4t-8 7l3-8M19.500 6.500q-6-.5-6 2.500t3 4-1 5-5 1" />
            </svg>
            <BrandName>
              <Text w={42} size={13.5} bold color="#f2f3f4">SOLID</Text>
              <Text w={44} size={13.5} color="#f2f3f4">WORKS</Text>
            </BrandName>
          </Brand>
          <BrandArrow><svg width="5" height="8" viewBox="0 0 5 8"><path d="M0 0l4.500 4L0 8Z" fill="#333" /></svg></BrandArrow>
          <Slot $w={22} $ml={33}><I n="doc" s={17} /></Slot><Slot $w={22}><Caret /></Slot>
          <Slot $w={23}><I n="open" s={17} /></Slot><Slot $w={22}><Caret /></Slot>
          <Slot $w={23}><I n="save" s={17} /></Slot><Slot $w={22}><Caret /></Slot>
          <Slot $w={23}><I n="print" s={17} /></Slot><Slot $w={22}><Caret /></Slot>
          <Slot $w={23}><I n="undo" s={17} /></Slot><Slot $w={22}><Caret /></Slot>
          <SelectBox><SelectMain><I n="cursor" /></SelectMain><SelectDrop><Caret /></SelectDrop></SelectBox>
          <Slot $w={24}><I n="traffic" /></Slot>
          <Slot $w={24} $ml={8}><I n="props" s={17} /></Slot>
          <Slot $w={24} $ml={7}><I n="list" /></Slot>
          <Slot $w={20}><Caret /></Slot>
          <Slot $w={120} $ml={463}><Text w={120} color="#47484c">konsol solid tasarım</Text></Slot>
          <SearchBox>
            <I n="helpball" s={17} />
            <Slot $w={139} $ml={10}><Text w={139} size={12.5} color="#66686c">SOLIDWORKS Yardım'ı Ara</Text></Slot>
            <Slot $w={18} $ml={8}><I n="lens" s={17} /></Slot>
            <Slot $w={14}><Caret /></Slot>
          </SearchBox>
          <Slot $w={22} $ml={3}><I n="quest" s={15} /></Slot>
          <Slot $w={12}><Caret /></Slot>
          <Slot $w={22} $ml={2}><I n="min" /></Slot>
          <Slot $w={24}><I n="restore" s={17} /></Slot>
          <Slot $w={22}><I n="close" s={15} /></Slot>
        </TitleBar>

        <Ribbon>
          <BigButton icon="boss" w={76} ml={6} lines={[['Ekstrüzyon', 66], ['İle Katı', 40], ['Oluşturma', 64]]} />
          <BigButton icon="revolve" w={86} lines={[['Döndürerek', 72], ['Katı', 22], ['Oluşturma', 64]]} />
          <SmallButtons w={200} rows={[['sweep', 'Süpürerek Katı Oluşturma', 158], ['loft', 'Loft ile Katı Oluşturma', 137], ['boundary', 'Sınır ile Katı Oluşturma', 139]]} />
          <Sep />
          <BigButton icon="cut" w={73} ml={3} lines={[['Ekstrüzyon', 66], ['ile Kes', 38]]} />
          <BigButton icon="wizard" w={64} lines={[['Delik', 29], ['Sihirbazı', 49]]} />
          <BigButton icon="revcut" w={72} lines={[['Döndürme', 65], ['ile Kesme', 57]]} />
          <SmallButtons w={129} ml={4} rows={[['sweepcut', 'Kıvrımlı Kes', 69], ['loftcut', 'Loft ile Kesim', 81], ['boundcut', 'Sınır ile Kesme', 87]]} />
          <Sep />
          <BigButton icon="fillet" w={44} ml={6} lines={[['Radyus', 43]]} menu />
          <BigButton icon="pattern" w={63} ml={8} lines={[['Doğrusal', 54], ['Çoğaltma', 58]]} menu />
          <SmallButtons w={82} ml={5} rows={[['rib', 'Feder', 34], ['draft', 'Draft', 30], ['shell', 'Kabuk', 38]]} />
          <SmallButtons w={102} rows={[['wrap', 'Sar', 19], ['intersect', 'Kesişme', 49], ['mirror', 'Aynalama', 60]]} />
          <Sep />
          <BigButton icon="refgeo" w={66} ml={6} lines={[['Referans', 52], ['Geometrisi', 66]]} menu />
          <BigButton icon="curves" w={39} ml={9} lines={[['Eğriler', 38]]} menu />
          <Sep $ml={5} />
          <BigButton icon="instant" w={64} ml={4} lines={[['Anında3B', 59]]} />
          <Sep $ml={2} />
          <BigButton icon="revcut" w={72} ml={3} lines={[['Döndürme', 65], ['ile Kesme', 57]]} />
          <BigButton icon="hole" w={40} ml={2} lines={[['Basit', 28], ['Delik', 30]]} />
        </Ribbon>

        <Work>
          <CommandTabs>
            <CommandTab $w={81} $on><Text w={65} size={14} bold lh={19}>Unsurlar</Text></CommandTab>
            <CommandTab $w={57}><Text w={39} size={14.5} lh={17}>Çizim</Text></CommandTab>
            <CommandTab $w={71}><Text w={55} size={14.5} lh={17}>Hesapla</Text></CommandTab>
            <CommandTab $w={82}><Text w={65} size={14.5} lh={17}>DimXpert</Text></CommandTab>
            <CommandTab $w={187}><Text w={170} size={14.5} lh={17}>SOLIDWORKS Eklentileri</Text></CommandTab>
            <CommandTab $w={151}><Text w={136} size={14.5} lh={17}>SOLIDWORKS MBD</Text></CommandTab>
          </CommandTabs>

          <Side>
            <SideTabs>
              <SideTab $on><I n="part" /></SideTab>
              <SideTab><I n="props" /></SideTab>
              <SideTab><I n="config" /></SideTab>
              <SideTab><I n="target" /></SideTab>
              <SideTab><I n="beach" /></SideTab>
              <Chevron>
                <svg width="10" height="9" viewBox="0 0 10 9"><path d="M1 .5 4.500 4.500 1 8.500M5.500.5 9 4.500 5.500 8.500" fill="none" stroke="#222" strokeWidth="1.500" /></svg>
              </Chevron>
            </SideTabs>
            <Filter><I n="funnel" s={12} /></Filter>
            <Tree>
              <TreeRow $root><I n="part" /><Text w={166} size={14}>konsol solid tasarım  (Var</Text></TreeRow>
              {treeItems.map(([ic, t, w, plus], i) => (
                <TreeRow key={t}>
                  <Branch $last={i === 8}>{plus && <Expander />}</Branch>
                  <I n={ic} />
                  <Text w={w} size={14}>{t}</Text>
                </TreeRow>
              ))}
              <Rollback />
            </Tree>
            <Scroll>
              <Slot $w={20}><svg width="8" height="10" viewBox="0 0 8 10"><path d="M6 1 2 5l4 4" fill="none" stroke="#555" strokeWidth="1.800" /></svg></Slot>
              <Thumb />
              <Slot $w={18}><svg width="8" height="10" viewBox="0 0 8 10"><path d="M2 1l4 4-4 4" fill="none" stroke="#555" strokeWidth="1.800" /></svg></Slot>
            </Scroll>
            <SideFoot />
          </Side>

          <Viewport>
            <Plate />
            <HeadsUp>
              {headsUp.map((n, i) => n === 'v'
                ? <Slot key={i} $w={14}><Caret $c="#8b8d92" /></Slot>
                : <Slot key={i} $w={23}><I n={n} /></Slot>)}
            </HeadsUp>
            <DocButtons>
              <Slot $w={23}><I n="paneL" s={14} /></Slot>
              <Slot $w={23}><I n="paneR" s={14} /></Slot>
              <Slot $w={23}><I n="min" s={15} /></Slot>
              <Slot $w={23}><I n="restore" s={16} /></Slot>
              <Slot $w={23}><I n="close" s={14} /></Slot>
            </DocButtons>
            <TaskPane>
              <PaneTab><I n="home" /></PaneTab>
              <PaneTab><I n="books" /></PaneTab>
              <PaneTab><I n="folder" /></PaneTab>
              <PaneTab><I n="views" /></PaneTab>
              <PaneTab $on><I n="ball" /></PaneTab>
              <PaneTab><I n="props" /></PaneTab>
            </TaskPane>
          </Viewport>
          <Handle><HandleArrow /><HandleArrow /><HandleArrow /></Handle>
        </Work>

        <ModelTabs>
          <Nav><NavGlyph d="M1 0h1.500v12H1ZM10 0v12L3 6Z" /></Nav>
          <Nav><NavGlyph d="M9 0v12L2 6Z" /></Nav>
          <Nav><NavGlyph d="M3 0v12l7-6Z" /></Nav>
          <Nav><NavGlyph d="M10 0h1.500v12H10ZM2 0v12l7-6Z" /></Nav>
          <Slot $w={3} />
          <ModelTab $w={74} $on><Text w={49} size={14} bold lh={19} color="#000">Model</Text></ModelTab>
          <ModelTab $w={113}><Text w={88} size={14.5} lh={19}>3B Görünüm</Text></ModelTab>
          <ModelTab $w={147}><Text w={109} size={14.5} lh={19}>Hareket Etüdü 1</Text></ModelTab>
        </ModelTabs>

        <Status>
          <Text w={272} size={14}>SOLIDWORKS Premium 2015 x64 Sürümü</Text>
          <Slot $w={82} $ml={1336}><Text w={82} size={14}>Eksik Tanımlı</Text></Slot>
          <Slot $w={44} $ml={61}><Text w={44} size={14}>MMGS</Text></Slot>
          <Slot $w={18} $ml={1}><Caret $up /></Slot>
          <Slot $w={14} $ml={11}><I n="qbox" s={14} /></Slot>
          <Slot $w={16} $ml={54}><I n="tag" s={15} /></Slot>
        </Status>

        <TaskBar>
          <StartButton>
            <svg width="21" height="21" viewBox="0 0 21 21"><path d="M0 3l8.500-1.200V10H0ZM9.500 1.600 21 0v10H9.500ZM0 11h8.500v8.200L0 18ZM9.500 11H21v10L9.500 19.400Z" fill="#fff" /></svg>
          </StartButton>
          <TaskSearch>
            <svg width="21" height="21" viewBox="0 0 21 21"><circle cx="13" cy="7.500" r="6.500" fill="none" stroke="#222" strokeWidth="1.500" /><path d="M8.500 12.500 1 20" stroke="#222" strokeWidth="1.500" /></svg>
            <Text w={210} size={18.5} lh={24} color="#2f2f2f">Aramak için buraya yazın</Text>
          </TaskSearch>
          <TaskApp $ml={5}>
            <svg width="20" height="20" viewBox="0 0 20 20" fill="none" stroke="#f4f4f4" strokeWidth="1.200"><path d="M1 0v3.500h11V0M1 6h11v8.500H1ZM1 20v-3.500h11V20M18.500 0v5M18.500 11v9" /><path d="M17 6.500h3v3h-3Z" fill="#fff" stroke="none" /></svg>
          </TaskApp>
          <TaskApp>
            <svg width="26" height="28" viewBox="0 0 26 28"><path d="M7 2h17l1 22-5 4H7Z" fill="#5a9fc4" /><path d="M1 2.500h20V26l-20-1Z" fill="#8cc8e4" /><path d="M23 3v22M21.500 3v23" stroke="#bfe4f4" /><circle cx="11" cy="14" r="8.500" fill="#f5822a" stroke="#fbd0a0" strokeWidth=".8" /><path d="M8 8.500v11l8-5.500Z" fill="#fff" /></svg>
          </TaskApp>
          <TaskApp $run $ml={13}>
            <svg width="28" height="26" viewBox="0 0 28 26"><path d="M0 1h11l2 3H0Z" fill="#e0a000" /><path d="M0 4h27v20H0Z" fill="#fdd35c" /><path d="M0 4h27v3H0Z" fill="#ffe08a" /><path d="M5 14h18v11h-4v-5h-9.500v5H5Z" fill="#3b9ae8" /></svg>
          </TaskApp>
          <TaskApp $run>
            <svg width="28" height="28" viewBox="0 0 28 28"><circle cx="14" cy="14" r="13.500" fill="#fccd3e" /><path d="M14 14 2.300 7.250A13.500 13.500 0 0 1 25.700 7.250Z" fill="#dd4f43" /><path d="M2.300 7.250A13.500 13.500 0 0 0 13 27.500L19.200 17 14 14l-4 2Z" fill="#1ba260" /><path d="M14 8h11.800A13.500 13.500 0 0 1 13 27.500L19 17Z" fill="#fccd3e" /><circle cx="14" cy="14" r="6.300" fill="#f4f6f8" /><circle cx="14" cy="14" r="5" fill="#4a86ee" /></svg>
          </TaskApp>
          <TaskApp $ml={10}>
            <svg width="28" height="28" viewBox="0 0 28 28"><ellipse cx="14" cy="14" rx="14" ry="14" fill="#f01a2c" /><path d="M14 0a14 14 0 0 1 0 28q8-3 8-14T14 0Z" fill="#e03a42" /><ellipse cx="14" cy="14" rx="6" ry="10.500" fill="#3d2c26" /></svg>
          </TaskApp>
          <TaskApp $run $ml={12}>
            <svg width="26" height="27" viewBox="0 0 26 27"><path d="M0 12.500Q2 0 13.500 0 25 1 24.500 12v3.500H9q1 6 8 6 4 0 6.500-1.500v5Q20 27 15.500 27 4 26 4 16.500q.5-6 6-9.500Q4 8 0 12.500ZM9 11h9q-.5-5-4.500-5T9 11Z" fill="#0c78d8" fillRule="evenodd" /></svg>
          </TaskApp>
          <TaskApp $run>
            <svg width="28" height="28" viewBox="0 0 28 28"><path d="M0 0h28v28H0Z" fill="#29aef0" /><path d="M13 17l6-6 9 8v9H13Z" fill="#7c8ed8" /><path d="M0 20 9 10l18 18H0Z" fill="#174a8c" /><circle cx="18.500" cy="6.500" r="2.700" fill="#fff" /></svg>
          </TaskApp>
          <TaskApp $run $on $ml={6} $w={61}>
            <svg width="30" height="32" viewBox="0 0 30 32">
              <path d="M1 6 15 1l13 4v21l-12 4L1 25Z" fill="#c8141a" />
              <path d="M1 6 15 1l13 4-12 5Z" fill="#ff6a60" />
              <path d="M16 10l12-5v21l-12 4Z" fill="#a80c12" />
              <path d="M11.500 12.500 5 11v5.500l6 1.500v6L4 22.500" fill="none" stroke="#fff" strokeWidth="2.200" />
              <path d="M16.500 12.500l2 9.500 2.500-7 2 5.500 3-10.500" fill="none" stroke="#fff" strokeWidth="1.900" />
              <text x="12.500" y="30.500" fontFamily="Open Sans" fontWeight="700" fontSize="7.500" fill="#fff">2015</text>
            </svg>
          </TaskApp>
          <TaskApp $run $ml={6}>
            <svg width="30" height="30" viewBox="0 0 30 30"><path d="M11 5q12-2 13 9 0 10-10 12-5 0-4-4 1-4-4-2-6 2-5-4Q3 7 11 5Z" fill="#bfe0f2" stroke="#7fb0cc" /><circle cx="6" cy="15" r="2.200" fill="#e04038" /><circle cx="10" cy="10" r="2.200" fill="#58b848" /><circle cx="16" cy="9" r="2.200" fill="#f2c53a" /><circle cx="13" cy="16" r="1.700" fill="#333" /><path d="M15 28 24 9" stroke="#d98a3a" strokeWidth="2" /><path d="M22 8l1-7 3 2 2-1-1 6-3 3Z" fill="#c8a878" /></svg>
          </TaskApp>
          <Tray>
            <svg width="17" height="10" viewBox="0 0 17 10"><path d="M1 9l7.500-7.500L16 9" fill="none" stroke="#eee" strokeWidth="1.500" /></svg>
            <Slot $w={20} $ml={12}>
              <svg width="20" height="17" viewBox="0 0 20 17" fill="none" stroke="#fff" strokeWidth="1.200"><path d="M5 1h14.500v11.500H2.500V6M.7 1H4.500v5H.7ZM11 12.500v3M7 16h8" /></svg>
            </Slot>
            <Clock>
              <Text w={33} size={14.5} lh={23} color="#fff">18:41</Text>
              <Text w={61} size={14.5} lh={23} color="#fff">28.7.2020</Text>
            </Clock>
            <svg width="30" height="32" viewBox="0 0 30 32">
              <path d="M0 3h20v17h-9l-5 5v-5H0Z" fill="#fff" /><path d="M4 8h12M4 11.500h12M4 15h9" stroke="#443048" strokeWidth="1.200" />
              <circle cx="19.500" cy="21.500" r="9.500" fill="#34303a" stroke="#8d8790" />
              <text x="19.500" y="26.500" textAnchor="middle" fontFamily="Open Sans" fontWeight="700" fontSize="13" fill="#fff">4</text>
            </svg>
            <ShowDesktop />
          </Tray>
        </TaskBar>
      </Screen>
    </>
  );
}
